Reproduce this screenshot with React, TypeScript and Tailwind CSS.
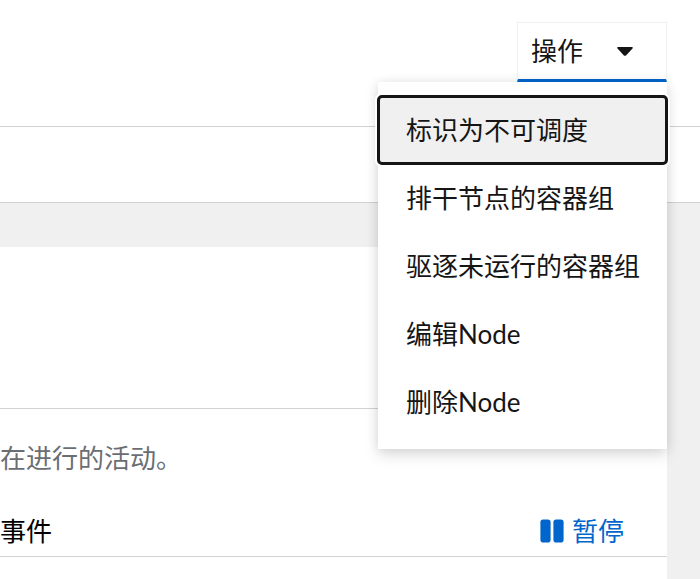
import React, { useState } from "react";

const actions = [
  "标识为不可调度",
  "排干节点的容器组",
  "驱逐未运行的容器组",
  "编辑Node",
  "删除Node",
];

function CaretDownIcon() {
  return (
    <svg viewBox="0 0 16 9" className="h-[9px] w-4" fill="currentColor" aria-hidden="true">
      <path d="M1.2 0h13.6c.9 0 1.3 1 .7 1.6L9 8.4c-.6.6-1.5.6-2.1 0L.5 1.6C-.1 1 .3 0 1.2 0z" />
    </svg>
  );
}

function PauseIcon() {
  return (
    <svg viewBox="0 0 24 24" className="h-6 w-6" fill="currentColor" aria-hidden="true">
      <rect x="0.4" y="0.4" width="10.2" height="23.2" rx="2.8" />
      <rect x="13.4" y="0.4" width="10.2" height="23.2" rx="2.8" />
    </svg>
  );
}

function ActionsMenu() {
  const [isOpen, setIsOpen] = useState(true);
  const [focused, setFocused] = useState(0);

  return (
    <div className="relative">
      <button
        type="button"
        aria-haspopup="menu"
        aria-expanded={isOpen}
        onClick={() => setIsOpen(!isOpen)}
        className="flex h-[60px] w-[150px] items-center gap-[34px] border border-b-3 border-[#f0f0f0] border-b-[#0066cc] bg-white pl-[13px]"
      >
        <span>操作</span>
        <CaretDownIcon />
      </button>

      {isOpen && (
        <ul
          role="menu"
          className="absolute top-full right-0 z-10 bg-white pt-[14px] pb-[13px] shadow-[0_6px_14px_rgba(3,3,3,0.13),0_0_10px_rgba(3,3,3,0.08)]"
        >
          {actions.map((label, index) => (
            <li key={label} role="none">
              <button
                type="button"
                role="menuitem"
                onFocus={() => setFocused(index)}
                className={`flex h-[68px] w-full items-center pr-[27px] pl-7 text-left whitespace-nowrap ${
                  focused === index
                    ? "rounded-[4px] bg-[#f0f0f0] shadow-[0_0_0_3px_#fff] outline-3 -outline-offset-2 outline-[#151515]"
                    : "outline-none"
                }`}
              >
                {label}
              </button>
            </li>
          ))}
        </ul>
      )}
    </div>
  );
}

export default function App() {
  return (
    <div className="flex min-h-screen flex-col overflow-x-hidden bg-[#f0f0f0] font-['Lato','Noto_Sans_CJK_SC',sans-serif] text-[26px] leading-10 text-[#151515]">
      <header className="flex h-[127px] items-start justify-end border-b border-[#d2d2d2] bg-white pt-[22px] pr-[33px]">
        <ActionsMenu />
      </header>
      <div className="h-[76px] border-b border-[#d2d2d2] bg-white" />

      <main className="flex grow pt-11 pr-[33px]">
        <section className="grow bg-white">
          <div className="h-[162px] border-b border-[#d2d2d2]" />
          <p className="pt-[29px] text-[#6a6e73]">在进行的活动。</p>
          <div className="flex items-end justify-between border-b border-[#d2d2d2] pt-[33px] pr-[43px] pb-[5px]">
            <h2 className="text-black">事件</h2>
            <button type="button" className="flex items-center gap-2 text-[#0066cc]">
              <PauseIcon />
              <span>暂停</span>
            </button>
          </div>
        </section>
      </main>
    </div>
  );
}
